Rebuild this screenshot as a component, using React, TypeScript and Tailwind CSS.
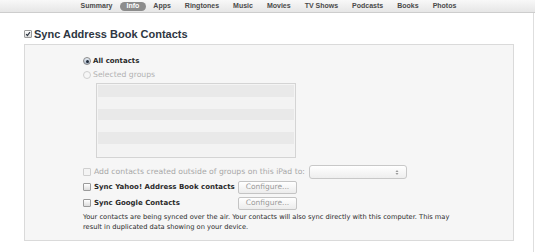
const tabs = ["Summary", "Info", "Apps", "Ringtones", "Music", "Movies", "TV Shows", "Podcasts", "Books", "Photos"];

const body = { fontFamily: '"DejaVu Sans", "Lucida Grande", sans-serif' };
const helv = { fontFamily: '"Liberation Sans", Arial, sans-serif' };

function Check({ disabled = false, checked = false }: { disabled?: boolean; checked?: boolean }) {
  return (
    <span
      className={`flex h-[8px] w-[8px] shrink-0 items-center justify-center rounded-[1px] border ${
        disabled ? "border-[#cfcfcf] bg-[#f4f4f4]" : "border-[#9a9a9a] bg-gradient-to-b from-white to-[#dcdcdc]"
      }`}
    >
      {checked && (
        <svg viewBox="0 0 8 8" className="h-[8px] w-[8px]">
          <path d="M1.5 4.2 3.2 6 6.6 1.4" fill="none" stroke="#2c3440" strokeWidth="1.5" />
        </svg>
      )}
    </span>
  );
}

function Radio({ on = false, disabled = false }: { on?: boolean; disabled?: boolean }) {
  return (
    <span
      className={`flex h-[8px] w-[8px] shrink-0 items-center justify-center rounded-full border ${
        disabled ? "border-[#cfcfcf] bg-[#f6f6f6]" : "border-[#8a8a8a] bg-gradient-to-b from-[#e8eef6] to-[#a9b6c6]"
      }`}
    >
      {on && <span className="h-[3px] w-[3px] rounded-full bg-[#1f2a3a]" />}
    </span>
  );
}

function Button() {
  return (
    <span className="flex h-[13px] w-[59px] shrink-0 items-center justify-center rounded-[2px] border border-[#c4c4c4] bg-gradient-to-b from-white to-[#ececec] text-[7.5px] text-[#9a9a9a]">
      Configure...
    </span>
  );
}

export default function App() {
  return (
    <div className="relative h-[252px] w-[535px] overflow-hidden bg-white" style={body}>
      <nav
        className="flex h-[13px] items-center justify-center border-b border-[#cdcdcd] bg-gradient-to-b from-[#f8f8f8] to-[#e6e6e6] pl-[2px]"
        style={helv}
      >
        {tabs.map((t) => (
          <span
            key={t}
            className={`flex h-[9px] items-center rounded-full px-[7px] text-[7px] font-bold ${
              t === "Info" ? "bg-[#8c8c8c] text-white" : "text-[#4a4a4a]"
            }`}
          >
            {t}
          </span>
        ))}
      </nav>

      <div className="absolute right-0 top-[13px] h-[239px] w-[2px] border-l border-[#dedede]" />

      <div className="pl-[24px] pr-[22px] pt-[15px]">
        <div className="flex h-[12px] items-center gap-[2px]">
          <Check checked />
          <h1 className="text-[11px] font-bold leading-[12px] text-[#2e3642]" style={helv}>
            Sync Address Book Contacts
          </h1>
        </div>

        <section className="mt-[4px] h-[197px] w-[490px] border border-[#dadada] bg-[#f6f6f6] pl-[58px] pt-[11px] text-[7.7px] text-[#2a2a2a]">
          <div className="flex h-[10px] items-center gap-[2px]">
            <Radio on />
            <span className="text-[7px] font-bold">All contacts</span>
          </div>
          <div className="mt-[4px] flex h-[10px] items-center gap-[2px]">
            <Radio disabled />
            <span className="text-[#b2b2b2]">Selected groups</span>
          </div>

          <div className="ml-[13px] mt-[3px] flex h-[75px] w-[200px] flex-col border border-[#d4d4d4] bg-[#f4f4f4] p-[1px]">
            {[0, 1, 2, 3, 4, 5].map((i) => (
              <div key={i} className={`flex-1 ${i % 2 === 0 ? "bg-[#e9e9e9]" : "bg-[#f3f3f3]"}`} />
            ))}
          </div>

          <div className="mt-[7px] flex h-[14px] items-center gap-[3px]">
            <Check disabled />
            <span className="text-[#a8a8a8]">Add contacts created outside of groups on this iPad to:</span>
            <span className="ml-[1px] flex h-[14px] w-[98px] items-center justify-end rounded-[3px] border border-[#c8c8c8] bg-gradient-to-b from-white to-[#eeeeee] pr-[7px]">
              <svg viewBox="0 0 4 7" className="h-[7px] w-[4px]">
                <path d="M0.5 3 2 1 3.5 3Z M0.5 4 2 6 3.5 4Z" fill="#9a9a9a" />
              </svg>
            </span>
          </div>

          <div className="mt-[1px] flex h-[14px] items-center">
            <div className="flex w-[155px] items-center gap-[3px]">
              <Check />
              <span className="whitespace-nowrap text-[7px] font-bold">Sync Yahoo! Address Book contacts</span>
            </div>
            <Button />
          </div>

          <div className="mt-[2px] flex h-[14px] items-center">
            <div className="flex w-[155px] items-center gap-[3px]">
              <Check />
              <span className="whitespace-nowrap text-[7px] font-bold">Sync Google Contacts</span>
            </div>
            <Button />
          </div>

          <p className="mt-[2px] w-[368px] text-[6.7px] leading-[10px] text-[#2a2a2a]">
            Your contacts are being synced over the air. Your contacts will also sync directly with this computer. This may result in duplicated data showing on your device.
          </p>
        </section>
      </div>
    </div>
  );
}
